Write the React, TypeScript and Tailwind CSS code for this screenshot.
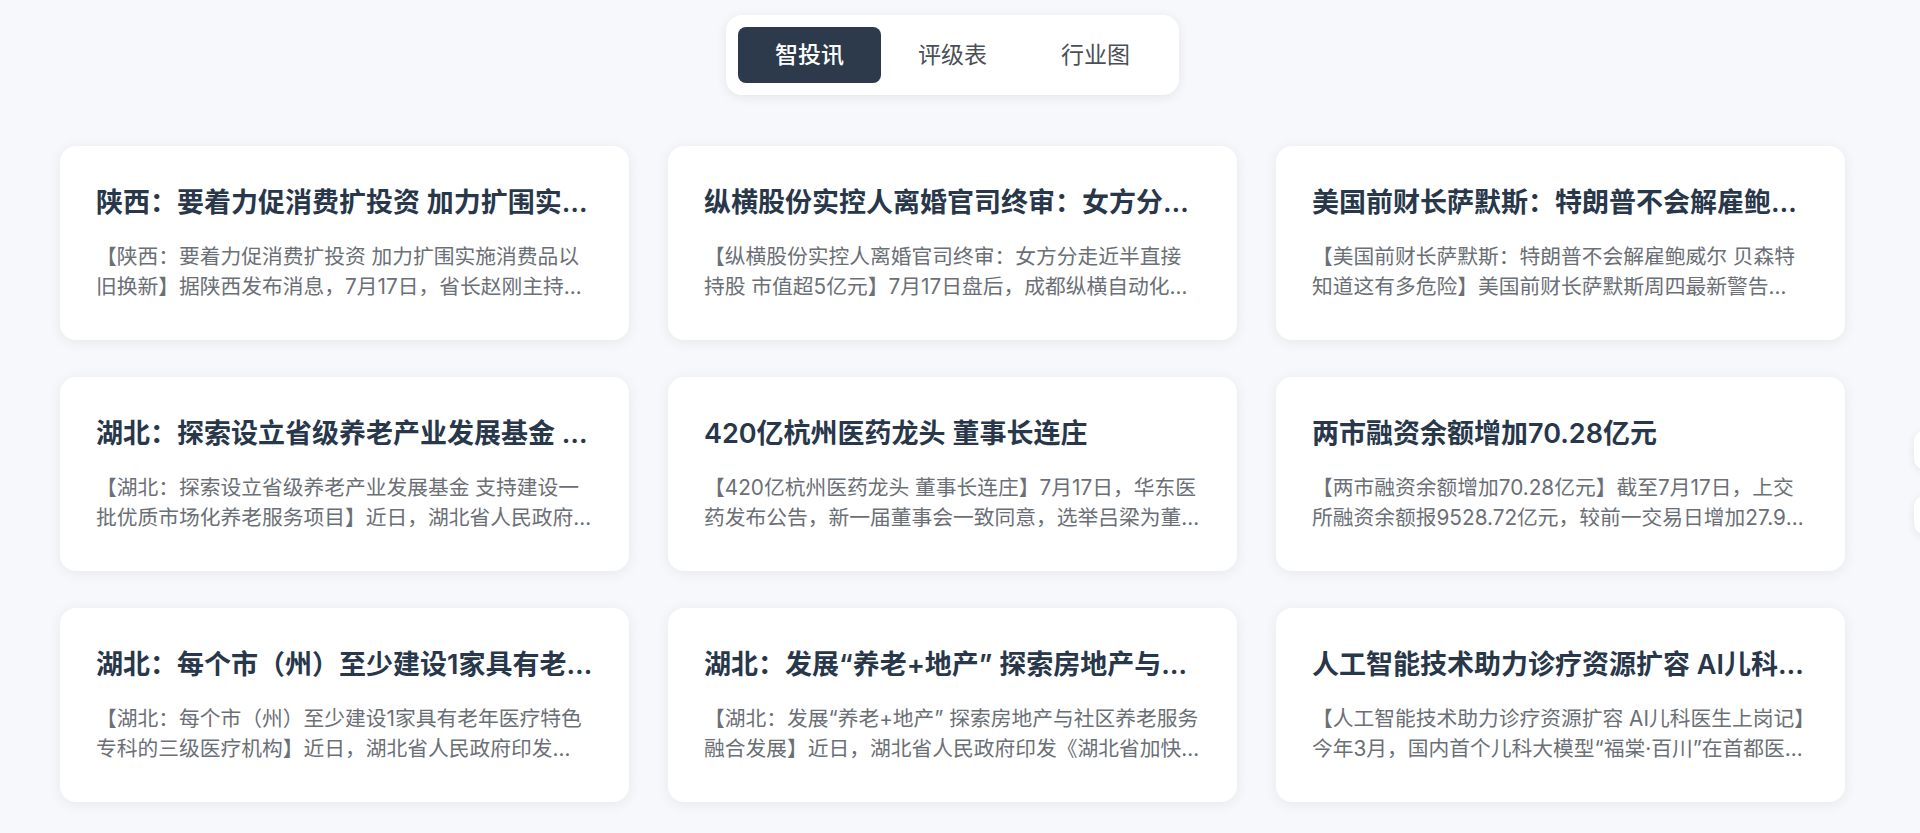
import { useState } from 'react'

interface NewsItem {
  id: number
  title: string
  summary: string
}

const tabs = ['智投讯', '评级表', '行业图']

const news: NewsItem[] = [
  {
    id: 1,
    title: '陕西：要着力促消费扩投资 加力扩围实施消费品以旧换新',
    summary: '【陕西：要着力促消费扩投资 加力扩围实施消费品以旧换新】据陕西发布消息，7月17日，省长赵刚主持召开省政府常务会议',
  },
  {
    id: 2,
    title: '纵横股份实控人离婚官司终审：女方分走近半直接持股',
    summary: '【纵横股份实控人离婚官司终审：女方分走近半直接持股 市值超5亿元】7月17日盘后，成都纵横自动化技术股份有限公司发布公告',
  },
  {
    id: 3,
    title: '美国前财长萨默斯：特朗普不会解雇鲍威尔 贝森特知道这有多危险',
    summary: '【美国前财长萨默斯：特朗普不会解雇鲍威尔 贝森特知道这有多危险】美国前财长萨默斯周四最新警告称，特朗普不会解雇美联储主席鲍威尔',
  },
  {
    id: 4,
    title: '湖北：探索设立省级养老产业发展基金 支持建设一批优质市场化养老服务项目',
    summary: '【湖北：探索设立省级养老产业发展基金 支持建设一批优质市场化养老服务项目】近日，湖北省人民政府办公厅印发',
  },
  {
    id: 5,
    title: '420亿杭州医药龙头 董事长连庄',
    summary: '【420亿杭州医药龙头 董事长连庄】7月17日，华东医药发布公告，新一届董事会一致同意，选举吕梁为董事长',
  },
  {
    id: 6,
    title: '两市融资余额增加70.28亿元',
    summary: '【两市融资余额增加70.28亿元】截至7月17日，上交所融资余额报9528.72亿元，较前一交易日增加27.96亿元',
  },
  {
    id: 7,
    title: '湖北：每个市（州）至少建设1家具有老年医疗特色专科的三级医疗机构',
    summary: '【湖北：每个市（州）至少建设1家具有老年医疗特色专科的三级医疗机构】近日，湖北省人民政府印发《湖北省加快',
  },
  {
    id: 8,
    title: '湖北：发展“养老+地产” 探索房地产与社区养老服务融合发展',
    summary: '【湖北：发展“养老+地产” 探索房地产与社区养老服务融合发展】近日，湖北省人民政府印发《湖北省加快推进养老服务',
  },
  {
    id: 9,
    title: '人工智能技术助力诊疗资源扩容 AI儿科医生上岗记',
    summary: '【人工智能技术助力诊疗资源扩容 AI儿科医生上岗记】今年3月，国内首个儿科大模型“福棠·百川”在首都医科大学附属北京儿童医院上线',
  },
]

export default function App() {
  const [active, setActive] = useState(0)

  return (
    <div
      className="relative min-h-[833px] overflow-hidden bg-[#f7f8fb] pl-[60px] pr-[75px]"
      style={{ fontFamily: 'Inter, "Noto Sans CJK SC", sans-serif' }}
    >
      <div className="flex justify-center pt-[15px]">
        <div className="flex rounded-2xl bg-white p-3 shadow-[0_2px_12px_rgba(0,0,0,0.08)]">
          {tabs.map((tab, i) => (
            <button
              key={tab}
              onClick={() => setActive(i)}
              className={`h-[56px] w-[143px] rounded-lg text-[23px] leading-none ${
                active === i ? 'bg-[#2c3a4c] font-medium text-white' : 'text-[#4a4f57]'
              }`}
            >
              {tab}
            </button>
          ))}
        </div>
      </div>

      <div className="mt-[51px] grid grid-cols-3 gap-x-[39px] gap-y-[37px]">
        {news.map((item) => (
          <div
            key={item.id}
            className="h-[194px] rounded-2xl bg-white px-9 pt-[37px] shadow-[0_2px_14px_rgba(0,0,0,0.07)]"
          >
            <h2 className="truncate text-[27px] font-semibold leading-[39px] text-[#28374a]">
              {item.title}
            </h2>
            <p className="mt-5 line-clamp-2 text-[20.75px] leading-[30px] text-[#6b6f76]">
              {item.summary}
            </p>
          </div>
        ))}
      </div>

      <div className="absolute right-[-38px] top-[430px] h-[40px] w-[44px] rounded-xl bg-white shadow-[0_2px_10px_rgba(0,0,0,0.08)]" />
      <div className="absolute right-[-38px] top-[495px] h-[40px] w-[44px] rounded-xl bg-white shadow-[0_2px_10px_rgba(0,0,0,0.08)]" />
    </div>
  )
}
